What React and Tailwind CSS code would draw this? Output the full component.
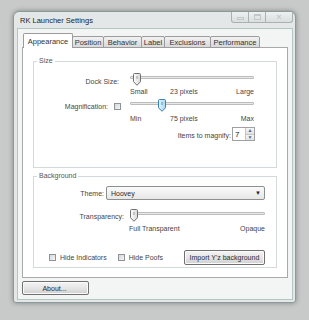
import React from 'react';

// Vista-style trackbar thumb, pointing down
function Thumb({ pos, active }) {
  const id = active ? 'thumb-active' : 'thumb-idle';
  return (
    <svg width="8" height="13" viewBox="0 0 8 13" className={`absolute top-0 ${pos}`}>
      <defs>
        <linearGradient id={id} x1="0" y1="0" x2="1" y2="0">
          <stop offset="0" stopColor={active ? '#e4f4fd' : '#fdfdfd'} />
          <stop offset="1" stopColor={active ? '#a9d8f3' : '#d9d9d9'} />
        </linearGradient>
      </defs>
      <path
        d="M1.5 0.5h5a1 1 0 0 1 1 1v7.2l-3.5 3.6l-3.5-3.6v-7.2a1 1 0 0 1 1-1z"
        fill={`url(#${id})`}
        stroke={active ? '#3c7fb1' : '#707070'}
      />
      <path d="M4 3v3" stroke={active ? '#5a8fb8' : '#9a9a9a'} />
    </svg>
  );
}

function Slider({ width, pos, active }) {
  return (
    <div className={`relative h-[13px] ${width}`}>
      <div className="mt-[3px] h-[3px] rounded-[1px] border border-[#bcbcbc] bg-[#e8e9e9]" />
      <Thumb pos={pos} active={active} />
    </div>
  );
}

function CheckBox() {
  return (
    <div className="h-[7px] w-[7px] border border-[#8f9396] bg-gradient-to-br from-[#d3d8dc] to-[#f4f6f7]" />
  );
}

function Button({ className, children }) {
  return (
    <div
      className={`flex items-center justify-center rounded-[2px] border border-[#707070] bg-gradient-to-b from-[#f4f4f4] via-[#e6e6e6] to-[#cfcfcf] text-[#2a2a2a] shadow-[inset_0_0_0_1px_#fbfbfb] ${className}`}
    >
      {children}
    </div>
  );
}

const tabs = [
  ['Position', 'w-[32px]'],
  ['Behavior', 'w-[39px]'],
  ['Label', 'w-[24px]'],
  ['Exclusions', 'w-[47px]'],
  ['Performance', 'w-[50px]'],
];

export default function App() {
  return (
    <div className="h-[320px] w-[309px] bg-[#c7cac9] pl-[13px] pt-[11px] font-['Liberation_Sans',Arial,sans-serif] text-[7px] leading-[9px] text-[#454545]">
      <div className="flex h-[292px] w-[283px] flex-col rounded-t-[6px] rounded-b-[3px] border border-[#8d9a9a] bg-[#e3e7e7] pl-[3px] shadow-[0_0_5px_rgba(0,0,0,0.35)]">
        {/* title bar */}
        <div className="flex h-[16px] items-start justify-between">
          <div className="mt-[4px] pl-[3px] text-[7.5px] font-medium leading-[9px] text-[#1e1e1e]">
            RK Launcher Settings
          </div>
          <div className="mr-[2px] flex h-[11px]">
            <div className="flex w-[18px] items-center justify-center rounded-bl-[3px] border border-t-0 border-[#aab1b1] bg-gradient-to-b from-[#eef1f1] to-[#d9dede]">
              <div className="mt-[3px] h-[3px] w-[7px] border border-[#c2c8c8]" />
            </div>
            <div className="-ml-px flex w-[18px] items-center justify-center border border-t-0 border-[#aab1b1] bg-gradient-to-b from-[#eef1f1] to-[#d9dede]">
              <div className="h-[6px] w-[7px] border border-t-2 border-[#c2c8c8]" />
            </div>
            <div className="-ml-px flex w-[28px] items-center justify-center rounded-br-[3px] border border-t-0 border-[#aab1b1] bg-gradient-to-b from-[#eef1f1] to-[#d9dede] text-[9px] font-bold leading-[9px] text-[#c4caca]">
              ×
            </div>
          </div>
        </div>

        {/* client area */}
        <div className="flex h-[272px] w-[276px] flex-col border border-[#b4c6c3] bg-[#f3f4f4] px-[4px] pt-[4px]">
          {/* tabs */}
          <div className="relative z-10 -mb-px ml-[1px] flex items-end text-[7.5px] leading-[9px]">
            <div className="relative z-10 flex h-[15px] w-[50px] items-start justify-center rounded-t-[2px] border border-b-0 border-[#9c9c9c] bg-white pt-[3px] text-[#333]">
              Appearance
            </div>
            {tabs.map(([label, w]) => (
              <div
                key={label}
                className={`-ml-px flex h-[12px] items-center justify-center rounded-t-[2px] border border-[#9c9c9c] bg-gradient-to-b from-[#f2f2f2] to-[#d8d8d8] text-[#333] ${w}`}
              >
                {label}
              </div>
            ))}
          </div>

          {/* tab panel */}
          <div className="flex h-[231px] w-[266px] flex-col border border-[#a9a9a9] bg-white pb-[9px] pl-[10px] pr-[10px] pt-[9px]">
            {/* Size */}
            <fieldset className="flex h-[111px] w-[244px] flex-col border border-[#d4d9dc] px-0">
              <legend className="ml-[3px] px-[2px] leading-[8px] text-[#555]">Size</legend>
              <div className="mt-[8px] flex h-[13px] items-center">
                <div className="flex w-[96px] justify-end pr-[11px] pt-[3px]">Dock Size:</div>
                <Slider width="w-[124px]" pos="left-[3px]" />
              </div>
              <div className="ml-[96px] mt-[1px] flex w-[124px]">
                <span className="w-[40px]">Small</span>
                <span>23 pixels</span>
                <span className="ml-auto">Large</span>
              </div>
              <div className="mt-[3px] flex h-[13px] items-center">
                <div className="flex w-[96px] items-center justify-end pr-[9px] pt-[2px]">
                  <span className="mr-[6px]">Magnification:</span>
                  <CheckBox />
                </div>
                <Slider width="w-[124px]" pos="left-[28px]" active />
              </div>
              <div className="ml-[96px] mt-[2px] flex w-[124px]">
                <span className="w-[40px]">Min</span>
                <span>75 pixels</span>
                <span className="ml-auto">Max</span>
              </div>
              <div className="mt-[4px] flex h-[14px] items-center justify-end gap-[1px] pr-[21px]">
                <span className="pt-[2px]">Items to magnify:</span>
                <div className="flex h-[14px] w-[23px] border border-[#a0a0a0] bg-white">
                  <div className="flex w-[12px] items-center pl-[2px] text-[8px] text-[#202020]">7</div>
                  <div className="flex flex-1 flex-col border-l border-[#c4c4c4]">
                    <div className="flex flex-1 items-center justify-center border-b border-[#c4c4c4] bg-gradient-to-b from-[#f5f5f5] to-[#e2e2e2] text-[5px] leading-[5px] text-[#4d6f94]">▲</div>
                    <div className="flex flex-1 items-center justify-center bg-gradient-to-b from-[#f5f5f5] to-[#e2e2e2] text-[5px] leading-[5px] text-[#4d6f94]">▼</div>
                  </div>
                </div>
              </div>
            </fieldset>

            {/* Background */}
            <fieldset className="mt-[4px] flex h-[96px] w-[244px] flex-col border border-[#d4d9dc] px-0">
              <legend className="ml-[3px] px-[2px] leading-[8px] text-[#555]">Background</legend>
              <div className="mt-[6px] flex h-[14px] items-center">
                <div className="flex w-[72px] justify-end pr-[2px]">Theme:</div>
                <div className="flex h-[14px] w-[159px] items-center justify-between rounded-[2px] border border-[#8e8f8f] bg-gradient-to-b from-[#fafafa] to-[#e7e7e7] pl-[4px] pr-[3px] text-[#2a2a2a]">
                  <span>Hoovey</span>
                  <span className="text-[6px] leading-[6px]">▼</span>
                </div>
              </div>
              <div className="mt-[9px] flex h-[13px] items-center">
                <div className="flex w-[96px] justify-end pr-[6px] pt-[2px]">Transparency:</div>
                <Slider width="w-[135px]" pos="left-0" />
              </div>
              <div className="ml-[95px] mt-[2px] flex w-[136px] justify-between">
                <span>Full Transparent</span>
                <span>Opaque</span>
              </div>
              <div className="mt-[17px] flex h-[15px] items-center pl-[15px]">
                <CheckBox />
                <span className="ml-[4px]">Hide Indicators</span>
                <div className="ml-[11px]">
                  <CheckBox />
                </div>
                <span className="ml-[4px]">Hide Poofs</span>
                <Button className="ml-[21px] h-[15px] w-[81px]">Import Y'z background</Button>
              </div>
            </fieldset>
          </div>

          <Button className="mt-[3px] h-[14px] w-[67px] pr-[2px]">About...</Button>
        </div>
      </div>
    </div>
  );
}
